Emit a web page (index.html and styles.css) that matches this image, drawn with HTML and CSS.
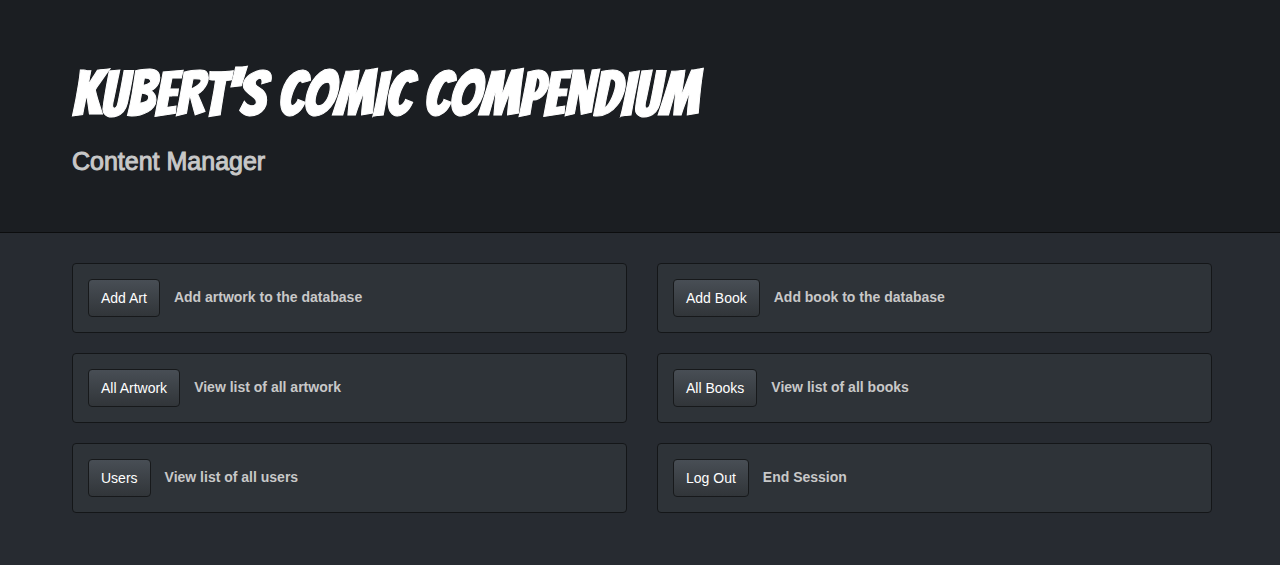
FILE: index.html
```html
<!DOCTYPE html>
<html lang="en">
<head>
<meta charset="utf-8">
<meta name="viewport" content="width=device-width, initial-scale=1">
<title>Kubert's Comic Compendium</title>
<link rel="stylesheet" href="styles.css">
</head>
<body>
<header class="masthead">
  <h1 class="brand">KUBERT'S COMIC COMPENDIUM</h1>
  <p class="subtitle">Content Manager</p>
</header>
<main class="actions">
  <section class="card"><button class="btn" type="button" aria-describedby="d1">Add Art</button><p class="desc" id="d1">Add artwork to the database</p></section>
  <section class="card"><button class="btn" type="button" aria-describedby="d2">Add Book</button><p class="desc" id="d2">Add book to the database</p></section>
  <section class="card"><button class="btn" type="button" aria-describedby="d3">All Artwork</button><p class="desc" id="d3">View list of all artwork</p></section>
  <section class="card"><button class="btn" type="button" aria-describedby="d4">All Books</button><p class="desc" id="d4">View list of all books</p></section>
  <section class="card"><button class="btn" type="button" aria-describedby="d5">Users</button><p class="desc" id="d5">View list of all users</p></section>
  <section class="card"><button class="btn" type="button" aria-describedby="d6">Log Out</button><p class="desc" id="d6">End Session</p></section>
</main>
</body>
</html>
```
FILE: styles.css
```css
* {
  box-sizing: border-box;
}

body {
  margin: 0;
  background: #272b31;
  color: #c8c8c8;
  font-family: "Helvetica Neue", Helvetica, "Liberation Sans", Arial, sans-serif;
  font-size: 14px;
  line-height: 20px;
}

.masthead {
  padding: 58px 68px 55px 72px;
  background: #1b1e22;
  border-bottom: 1px solid #0c0d0e;
}

.brand {
  margin: 0;
  color: #fff;
  font-family: Bangers, "Liberation Sans Narrow", "Liberation Sans", sans-serif;
  font-size: 63px;
  font-weight: 400;
  line-height: 72px;
  -webkit-text-stroke: 1px #fff;
}

.subtitle {
  margin: 15px 0 0;
  font-size: 25px;
  font-weight: 400;
  line-height: 32px;
  -webkit-text-stroke: 1px #c8c8c8;
}

.actions {
  display: grid;
  grid-template-columns: repeat(2, minmax(0, 1fr));
  gap: 20px 30px;
  padding: 30px 68px 48px 72px;
}

.card {
  display: flex;
  align-items: center;
  gap: 14px;
  padding: 15px;
  background: #2e3338;
  border: 1px solid #141618;
  border-radius: 4px;
}

.btn {
  padding: 8px 12px;
  color: #fff;
  background: linear-gradient(#484e55, #3a3f44 60%, #313539);
  border: 1px solid #17191b;
  border-radius: 4px;
  font: inherit;
  cursor: pointer;
}

.desc {
  margin: 0;
  padding-bottom: 2px;
  font-weight: 700;
}
```
